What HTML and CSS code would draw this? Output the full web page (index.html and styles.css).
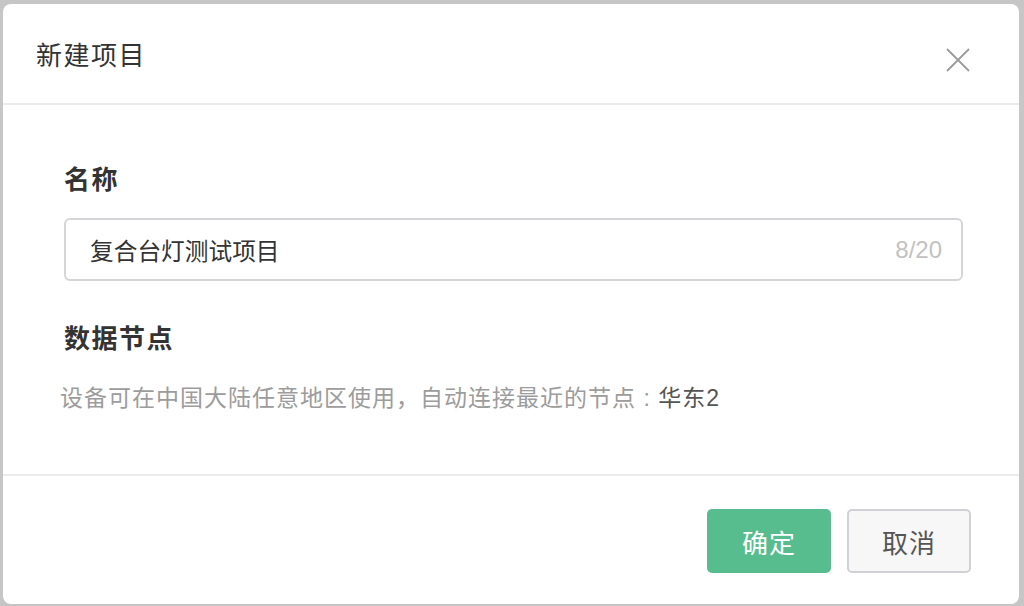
FILE: index.html
```html
<!DOCTYPE html>
<html lang="zh-CN">
<head>
<meta charset="utf-8">
<title>新建项目</title>
<link rel="stylesheet" href="styles.css">
</head>
<body>
<div class="dialog">
  <div class="dialog-header">
    <div class="dialog-title">新建项目</div>
    <button class="close-btn" aria-label="关闭">
      <svg width="24" height="24" viewBox="0 0 24 24"><path d="M1 1 L23 23 M23 1 L1 23" stroke="#9b9b9b" stroke-width="1.8" fill="none"/></svg>
    </button>
  </div>
  <div class="dialog-body">
    <div class="field-label">名称</div>
    <div class="input-box">
      <span class="input-value">复合台灯测试项目</span>
      <span class="input-count">8/20</span>
    </div>
    <div class="field-label second">数据节点</div>
    <div class="field-desc">设备可在中国大陆任意地区使用，自动连接最近的节点 : <span class="node">华东2</span></div>
  </div>
  <div class="dialog-footer">
    <button class="btn btn-primary">确定</button>
    <button class="btn btn-default">取消</button>
  </div>
</div>
</body>
</html>
```
FILE: styles.css
```css
html, body {
  margin: 0;
  padding: 0;
}
body {
  background: #c6c6c6;
  width: 1024px;
  height: 606px;
  overflow: hidden;
  font-family: "Liberation Sans", "Noto Sans CJK SC", sans-serif;
}
.dialog {
  margin: 4px 0 0 3px;
  width: 1016px;
  height: 600px;
  background: #fff;
  border-radius: 8px;
  display: flex;
  flex-direction: column;
  overflow: hidden;
}
.dialog-header {
  height: 99px;
  border-bottom: 2px solid #ebebeb;
  display: flex;
  align-items: center;
  justify-content: space-between;
  padding: 0 49px 0 33px;
  flex-shrink: 0;
}
.dialog-title {
  font-size: 26px;
  color: #333;
  letter-spacing: 1.5px;
  line-height: 36px;
  margin-top: 4px;
}
.close-btn {
  border: 0;
  background: none;
  padding: 0;
  width: 24px;
  height: 24px;
  margin-top: 12px;
  display: flex;
}
.dialog-body {
  padding: 57px 56px 0 61px;
  height: 312px;
  border-bottom: 2px solid #ebebeb;
  flex-shrink: 0;
}
.field-label {
  font-size: 26px;
  font-weight: bold;
  color: #333;
  line-height: 36px;
  letter-spacing: 1.5px;
}
.field-label.second {
  margin-top: 40px;
}
.input-box {
  margin-top: 20px;
  height: 63px;
  box-sizing: border-box;
  border: 2px solid #d3d5d8;
  border-radius: 6px;
  display: flex;
  align-items: center;
  justify-content: space-between;
  padding: 0 19px 0 24px;
}
.input-value {
  font-size: 23.7px;
  color: #333;
}
.input-count {
  font-size: 24px;
  color: #c2c2c2;
}
.field-desc {
  margin-top: 25px;
  margin-left: -4px;
  font-size: 23px;
  letter-spacing: 1px;
  line-height: 32px;
  color: #9c9c9c;
}
.field-desc .node {
  color: #555;
}
.dialog-footer {
  display: flex;
  justify-content: flex-end;
  gap: 16px;
  padding: 33px 48px 0 0;
}
.btn {
  width: 124px;
  height: 64px;
  box-sizing: border-box;
  border-radius: 5px;
  font-size: 26px;
  font-family: "Liberation Sans", "Noto Sans CJK SC", sans-serif;
  padding: 0;
  letter-spacing: 1px;
}
.btn-primary {
  background: #57bd8f;
  border: 0;
  color: #fff;
}
.btn-default {
  background: #f7f7f7;
  border: 2px solid #cfd1d4;
  color: #555;
}
```
